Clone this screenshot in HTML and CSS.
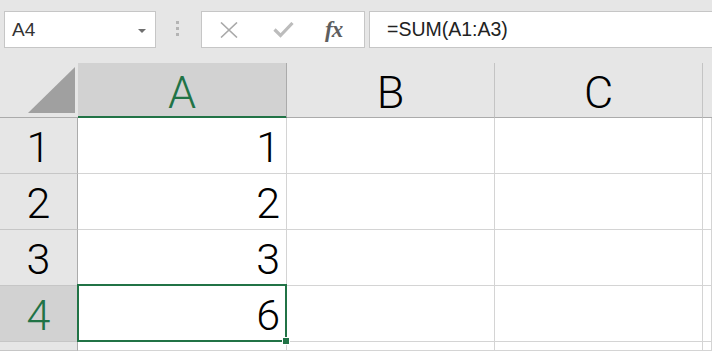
FILE: index.html
```html
<!DOCTYPE html>
<html lang="en">

<head>
  <meta charset="UTF-8">
  <meta name="viewport" content="width=device-width, initial-scale=1.0">
  <title>Sheet</title>
  <link rel="stylesheet" href="styles.css">
</head>

<body>
  <div class="toolbar">
    <div class="name-box">
      <span>A4</span>
      <span class="arrow"></span>
    </div>
    <div class="grip">
      <span></span><span></span><span></span>
    </div>
    <div class="func-box">
      <svg class="icon-x" width="18" height="16" viewBox="0 0 18 16">
        <path d="M1 0.5 L17 15.5 M17 0.5 L1 15.5" stroke="#a9a9a9" stroke-width="1.6" fill="none" />
      </svg>
      <svg class="icon-check" width="21" height="16" viewBox="0 0 21 16">
        <path d="M1.5 7.5 L7.5 13.5 L19.5 1" stroke="#bcbcbc" stroke-width="3.2" fill="none" />
      </svg>
      <span class="fx">fx</span>
    </div>
    <div class="formula">=SUM(A1:A3)</div>
  </div>

  <div class="sheet">
    <div class="corner"><span class="tri"></span></div>
    <div class="col-head active">A</div>
    <div class="col-head">B</div>
    <div class="col-head">C</div>
    <div class="col-head last"></div>

    <div class="row-head">1</div>
    <div class="cell num">1</div>
    <div class="cell"></div>
    <div class="cell"></div>
    <div class="cell"></div>

    <div class="row-head">2</div>
    <div class="cell num">2</div>
    <div class="cell"></div>
    <div class="cell"></div>
    <div class="cell"></div>

    <div class="row-head">3</div>
    <div class="cell num">3</div>
    <div class="cell"></div>
    <div class="cell"></div>
    <div class="cell"></div>

    <div class="row-head active">4</div>
    <div class="cell num selected">6
      <span class="sel-frame"></span>
      <span class="handle"></span>
    </div>
    <div class="cell"></div>
    <div class="cell"></div>
    <div class="cell"></div>

    <div class="row-head"></div>
    <div class="cell"></div>
    <div class="cell"></div>
    <div class="cell"></div>
    <div class="cell"></div>
  </div>
</body>

</html>
```

FILE: styles.css
```css
* {
  box-sizing: border-box;
}

body {
  margin: 0;
  width: 712px;
  height: 351px;
  overflow: hidden;
  background: #e6e6e6;
  font-family: 'Liberation Sans', Arial, sans-serif;
  color: #000;
}

/* Top bar: name box + formula bar */
.toolbar {
  display: flex;
  align-items: flex-start;
  height: 63px;
  padding: 11px 0 0 4px;
}

.name-box {
  display: flex;
  align-items: center;
  justify-content: space-between;
  width: 152px;
  height: 37px;
  padding: 1px 9px 0 7px;
  background: #fff;
  border: 1px solid #c6c6c6;
  font-size: 19px;
  color: #333;
}

.arrow {
  width: 0;
  height: 0;
  border-left: 4px solid transparent;
  border-right: 4px solid transparent;
  border-top: 4px solid #6f6f6f;
  margin-top: 1px;
}

.grip {
  display: flex;
  flex-direction: column;
  gap: 3px;
  margin: 10px 0 0 20px;
}

.grip span {
  display: block;
  width: 3px;
  height: 3px;
  background: #b4b4b4;
}

.func-box {
  display: flex;
  align-items: center;
  width: 164px;
  height: 37px;
  margin-left: 22px;
  padding-left: 18px;
  background: #fff;
  border: 1px solid #c6c6c6;
}

.icon-check {
  margin-left: 35px;
}

.fx {
  margin-left: 31px;
  font-family: 'Liberation Serif', 'Times New Roman', serif;
  font-style: italic;
  font-weight: bold;
  font-size: 23px;
  color: #5e5e5e;
  letter-spacing: -1px;
}

.formula {
  flex: 1;
  height: 37px;
  margin: 0 -10px 0 4px;
  padding: 6px 0 0 17px;
  background: #fff;
  border: 1px solid #c6c6c6;
  font-size: 19.5px;
  color: #222;
}

/* Grid */
.sheet {
  display: grid;
  grid-template-columns: 78px 209px 208px 208px 1fr;
  grid-template-rows: 55px repeat(4, 56px) 1fr;
  height: 288px;
  font-family: Roboto, 'Liberation Sans', sans-serif;
  font-weight: 300;
}

.corner {
  position: relative;
  border-bottom: 1px solid #ababab;
}

.tri {
  position: absolute;
  left: 28px;
  top: 4px;
  width: 0;
  height: 0;
  border-left: 47px solid transparent;
  border-bottom: 46px solid #a0a0a0;
}

.col-head {
  display: flex;
  justify-content: center;
  align-items: flex-end;
  font-size: 45px;
  line-height: 1;
  padding-bottom: 2px;
  border-right: 1px solid #c4c4c4;
  border-bottom: 1px solid #ababab;
}

.col-head.active {
  background: #d2d2d2;
  color: #217346;
  border-right-color: #ababab;
  border-bottom-color: #217346;
  box-shadow: inset 0 -1px 0 #217346;
}

.col-head.last {
  border-right: none;
}

.row-head {
  display: flex;
  justify-content: center;
  align-items: flex-end;
  font-size: 43px;
  line-height: 1;
  padding-bottom: 4px;
  border-right: 1px solid #ababab;
  border-bottom: 1px solid #c6c6c6;
}

.row-head.active {
  background: #d2d2d2;
  color: #217346;
}

.cell {
  display: flex;
  justify-content: flex-end;
  align-items: flex-end;
  background: #fff;
  font-size: 43px;
  line-height: 1;
  padding: 0 6px 4px 0;
  border-right: 1px solid #d4d4d4;
  border-bottom: 1px solid #d4d4d4;
}

.selected {
  position: relative;
}

.sel-frame {
  position: absolute;
  top: -2px;
  left: -1px;
  right: -1px;
  bottom: -1px;
  border: 2px solid #217346;
}

.handle {
  position: absolute;
  right: -3px;
  bottom: -3px;
  width: 6px;
  height: 6px;
  background: #217346;
  box-shadow: 0 0 0 1px #fff;
}
```
